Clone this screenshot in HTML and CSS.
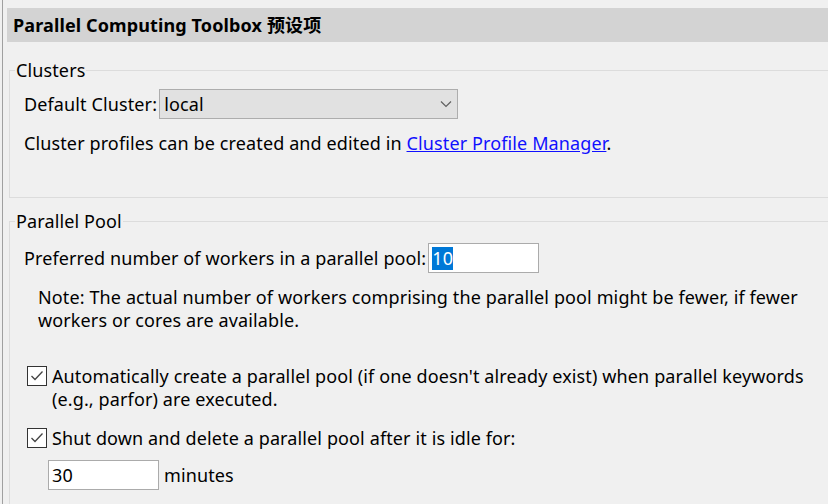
FILE: index.html
```html
<!DOCTYPE html>
<html lang="zh">
<head>
<meta charset="utf-8">
<title>Parallel Computing Toolbox 预设项</title>
<link rel="stylesheet" href="styles.css">
</head>
<body>
<div class="frame">
  <div class="header">Parallel Computing Toolbox 预设项</div>

  <fieldset class="group clusters">
    <legend>Clusters</legend>
    <div class="row">
      <span class="label">Default Cluster:</span>
      <div class="select">
        <span>local</span>
        <svg class="chev" width="12" height="8" viewBox="0 0 12 8"><path d="M1 1.5 L6 6.5 L11 1.5" fill="none" stroke="#606060" stroke-width="1.2"/></svg>
      </div>
    </div>
    <p class="line">Cluster profiles can be created and edited in <a class="link" href="#">Cluster Profile Manager</a>.</p>
  </fieldset>

  <fieldset class="group pool">
    <legend>Parallel Pool</legend>
    <div class="row first-row">
      <span class="label">Preferred number of workers in a parallel pool:</span>
      <div class="input wide"><span class="sel">10</span></div>
    </div>
    <p class="note">Note: The actual number of workers comprising the parallel pool might be fewer, if fewer workers or cores are available.</p>
    <div class="check first">
      <svg class="box" width="20" height="20" viewBox="0 0 20 20"><rect x="0.5" y="0.5" width="19" height="19" fill="#ffffff" stroke="#333333"/><path d="M4.5 10 L8 13.5 L15.5 5.5" fill="none" stroke="#444444" stroke-width="1.3"/></svg>
      <span class="ctext">Automatically create a parallel pool (if one doesn't already exist) when parallel keywords (e.g., parfor) are executed.</span>
    </div>
    <div class="check second">
      <svg class="box" width="20" height="20" viewBox="0 0 20 20"><rect x="0.5" y="0.5" width="19" height="19" fill="#ffffff" stroke="#333333"/><path d="M4.5 10 L8 13.5 L15.5 5.5" fill="none" stroke="#444444" stroke-width="1.3"/></svg>
      <span class="ctext">Shut down and delete a parallel pool after it is idle for:</span>
    </div>
    <div class="row minutes">
      <div class="input small"><span>30</span></div>
      <span class="label">minutes</span>
    </div>
  </fieldset>
</div>
</body>
</html>
```
FILE: styles.css
```css
html, body {
  margin: 0;
  padding: 0;
  background: #f0f0f0;
  width: 828px;
  height: 504px;
  overflow: hidden;
}
body {
  font-family: "Noto Sans", "Noto Sans CJK SC", sans-serif;
  font-size: 18px;
  letter-spacing: 0.12px;
  color: #000;
}
.frame {
  margin-left: 2px;
  border-left: 1px solid #a0a0a0;
  height: 504px;
  padding-left: 4px;
  padding-top: 8px;
  box-sizing: border-box;
}
.header {
  background: #d3d3d3;
  height: 34px;
  line-height: 34px;
  padding-left: 6px;
  font-weight: bold;
  font-size: 18px;
  white-space: nowrap;
}
.group {
  margin: 0 -20px 0 2px;
  border: 1px solid #dcdcdc;
  border-right: none;
  padding: 0 0 0 14px;
}
.group legend {
  padding: 0 1px;
  margin-left: -9px;
  line-height: 24px;
  font-size: 18px;
}
.clusters {
  margin-top: 16px;
  height: 140px;
  box-sizing: border-box;
}
.row {
  display: flex;
  align-items: center;
  gap: 2px;
}
.clusters .row {
  margin-top: 7px;
}
.select {
  width: 299px;
  height: 30px;
  box-sizing: border-box;
  border: 1px solid #adadad;
  background: #e1e1e1;
  display: flex;
  align-items: center;
  justify-content: space-between;
  padding: 0 5px 0 4px;
}
.line {
  margin: 12px 0 0;
  line-height: 24px;
}
.link {
  color: #1010ff;
  text-decoration: underline;
}
.pool {
  margin-top: 11px;
  height: 320px;
  box-sizing: border-box;
}
.first-row {
  margin-top: 10px;
}
.input {
  height: 30px;
  box-sizing: border-box;
  border: 1px solid #ababab;
  background: #fff;
  display: flex;
  align-items: center;
  padding-left: 3px;
}
.input.wide { width: 111px; }
.input.small { width: 111px; }
.sel {
  background: #0078d7;
  color: #fff;
  line-height: 23px;
}
.note {
  margin: 13px 0 0 14px;
  line-height: 23px;
  max-width: 770px;
}
.check {
  display: flex;
  align-items: flex-start;
  gap: 5px;
  margin-left: 3px;
}
.check .box {
  flex: none;
  margin-top: 1px;
}
.ctext {
  line-height: 23px;
  max-width: 760px;
}
.check.first { margin-top: 33px; }
.check.second { margin-top: 16px; }
.minutes {
  margin: 10px 0 0 24px;
  gap: 5px;
}
```
